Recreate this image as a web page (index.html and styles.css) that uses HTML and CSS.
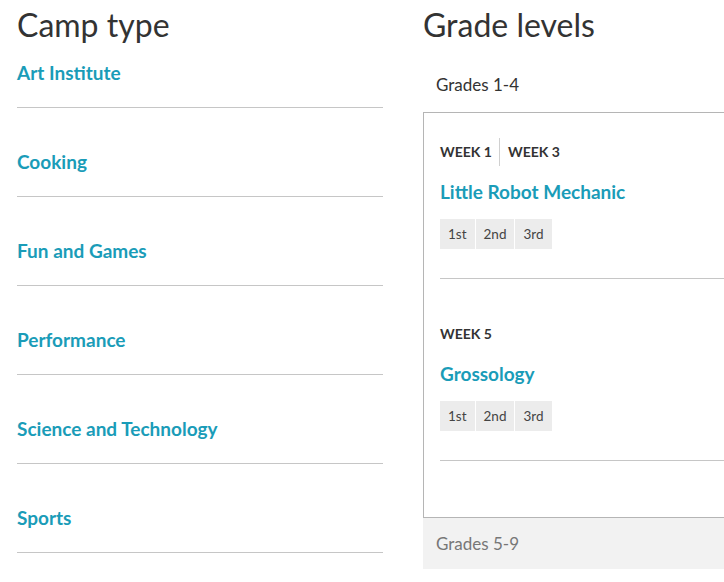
FILE: index.html
```html
<!DOCTYPE html>
<html lang="en">
<head>
<meta charset="utf-8">
<title>Camps</title>
<link rel="stylesheet" href="styles.css">
</head>
<body>
<div class="page">
  <section class="col-left">
    <h2 class="heading">Camp type</h2>
    <ul class="types">
      <li class="type"><a href="#">Art Institute</a></li>
      <li class="type"><a href="#">Cooking</a></li>
      <li class="type"><a href="#">Fun and Games</a></li>
      <li class="type"><a href="#">Performance</a></li>
      <li class="type"><a href="#">Science and Technology</a></li>
      <li class="type"><a href="#">Sports</a></li>
    </ul>
  </section>
  <section class="col-right">
    <h2 class="heading">Grade levels</h2>
    <div class="tab tab-active">Grades 1-4</div>
    <div class="panel">
      <div class="session">
        <div class="weeks"><span class="week">WEEK 1</span><span class="week">WEEK 3</span></div>
        <a class="title" href="#">Little Robot Mechanic</a>
        <div class="grades"><span class="grade">1st</span><span class="grade">2nd</span><span class="grade">3rd</span></div>
      </div>
      <div class="session">
        <div class="weeks"><span class="week">WEEK 5</span></div>
        <a class="title" href="#">Grossology</a>
        <div class="grades"><span class="grade">1st</span><span class="grade">2nd</span><span class="grade">3rd</span></div>
      </div>
    </div>
    <div class="tab tab-closed">Grades 5-9</div>
  </section>
</div>
</body>
</html>
```
FILE: styles.css
```css
html, body {
  margin: 0;
  padding: 0;
  overflow: hidden;
  background: #fff;
}
body {
  font-family: Lato, "Open Sans", sans-serif;
  color: #333;
}
.page {
  display: flex;
  gap: 40px;
  padding-left: 17px;
  width: 1000px;
}
.col-left {
  width: 366px;
  flex: none;
}
.col-right {
  width: 500px;
  flex: none;
}
.heading {
  margin: 5px 0 0;
  font-size: 32px;
  line-height: 40px;
  font-weight: 400;
  color: #333;
}
.types {
  list-style: none;
  margin: 0;
  padding: 0;
}
.type {
  padding: 40px 0 21px;
  border-bottom: 1px solid #c6c6c6;
  font-size: 19px;
  line-height: 27px;
  font-weight: 700;
}
.type:first-child {
  padding-top: 14px;
}
.type a, .title {
  color: #1a9cb8;
  text-decoration: none;
  font-weight: 700;
}
.tab {
  font-size: 17px;
  line-height: 25px;
  padding: 13px 13px;
}
.tab-active {
  margin-top: 14px;
  padding-bottom: 15px;
  height: 25px;
  color: #333;
}
.tab-closed {
  background: #f2f2f2;
  color: #777;
}
.panel {
  border: 1px solid #b5b5b5;
  border-right: none;
  padding: 25px 0 56px 16px;
}
.session {
  padding-bottom: 29px;
  border-bottom: 1px solid #c6c6c6;
}
.session + .session {
  padding-top: 41px;
}
.weeks {
  display: flex;
  height: 28px;
}
.week {
  font-size: 14px;
  font-weight: 700;
  line-height: 28px;
  color: #333;
  padding-right: 7px;
}
.week + .week {
  border-left: 1px solid #d0d0d0;
  padding-left: 8px;
}
.title {
  display: block;
  margin-top: 12px;
  font-size: 19px;
  line-height: 27px;
}
.grades {
  display: flex;
  gap: 1px;
  margin-top: 14px;
}
.grade {
  background: #ececec;
  color: #444;
  font-size: 13.5px;
  line-height: 30px;
  padding: 0 8px;
}
```
